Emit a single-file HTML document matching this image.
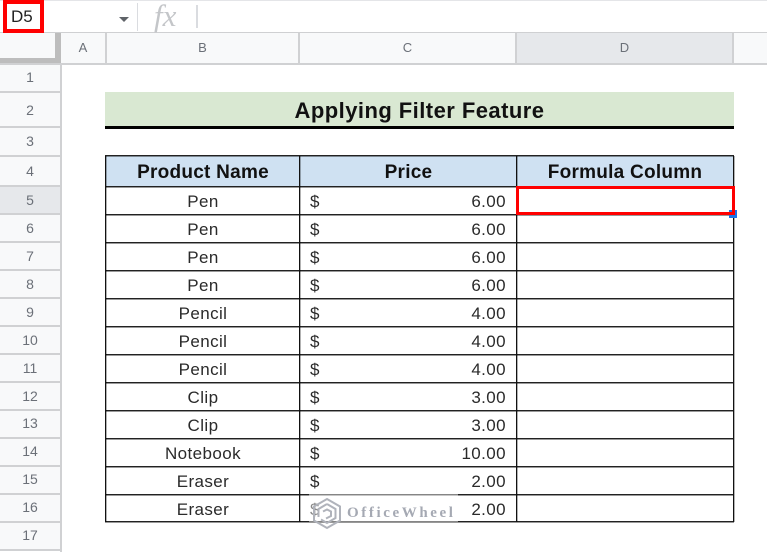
<!DOCTYPE html>
<html>
<head>
<meta charset="utf-8">
<style>
html,body{margin:0;padding:0;background:#fff}
#p{position:relative;width:767px;height:552px;overflow:hidden;background:#fff;font-family:"Liberation Sans",sans-serif;filter:blur(.3px)}
#p div{position:absolute;box-sizing:border-box}
.rh{left:0;width:60px;text-align:center;color:#6b7078;font-size:14px;background:#f8f9fa;border-bottom:2px solid #d0d1d3}
.ch{top:33px;height:31px;line-height:30px;text-align:center;color:#6b7078;font-size:13px;background:#f8f9fa;border-right:2px solid #d0d1d3}
.h{left:105px;width:629px;height:1px;background:#222;box-shadow:0 1px 0 rgba(0,0,0,.4)}
.v{top:156px;height:366px;width:1px;background:#111;box-shadow:1px 0 0 rgba(0,0,0,.3)}
.t{height:28px;line-height:29px;font-size:17px;color:#2a2a2a;text-align:center;letter-spacing:.4px}
.b{left:106px;width:194px}
.d{left:310px;width:20px;text-align:left}
.n{left:400px;width:106px;text-align:right}
.hd{top:158px;height:29px;line-height:29px;font-size:19px;font-weight:bold;color:#111;text-align:center;letter-spacing:.25px}
</style>
</head>
<body>
<div id="p">
  <div style="left:0;top:0;width:767px;height:1px;background:#e4e5e8"></div>
  <div style="left:0;top:32px;width:767px;height:2px;background:#cfd0d2"></div>
  <div style="left:137px;top:3px;width:1px;height:28px;background:#dadce0"></div>
  <div style="left:196px;top:5px;width:2px;height:23px;background:#dadce0"></div>
  <div style="left:11px;top:8px;font-size:17px;line-height:18px;color:#222">D5</div>
  <div style="left:119px;top:17px;width:0;height:0;border-left:5px solid transparent;border-right:5px solid transparent;border-top:5px solid #5f6368"></div>
  <div style="left:154px;top:0;font-family:'Liberation Serif',serif;font-style:italic;font-size:31px;line-height:32px;color:#c4c6c9">fx</div>
  <div style="left:3px;top:0;width:41px;height:33px;border:4px solid #f00"></div>

  <div style="left:0;top:33px;width:60px;height:31px;background:#f8f9fa"></div>
  <div style="left:0;top:58px;width:60px;height:6px;background:#bdbdbd"></div>
  <div style="left:55px;top:33px;width:6px;height:31px;background:#bdbdbd"></div>
  <div class="ch" style="left:61px;width:46px">A</div>
  <div class="ch" style="left:107px;width:193px">B</div>
  <div class="ch" style="left:300px;width:217px">C</div>
  <div class="ch" style="left:517px;width:217px;background:#e6e8eb">D</div>
  <div class="ch" style="left:734px;width:33px;border-right:0"></div>
  <div style="left:0;top:63px;width:767px;height:2px;background:#d0d1d3"></div>

  <div class="rh" style="top:65px;height:28px;line-height:25px">1</div>
  <div class="rh" style="top:93px;height:35px;line-height:34px">2</div>
  <div class="rh" style="top:128px;height:29px;line-height:27px">3</div>
  <div class="rh" style="top:157px;height:30px;line-height:28px">4</div>
  <div class="rh" style="top:187px;height:28px;line-height:26px;background:#e6e8eb">5</div>
  <div class="rh" style="top:215px;height:28px;line-height:26px">6</div>
  <div class="rh" style="top:243px;height:28px;line-height:26px">7</div>
  <div class="rh" style="top:271px;height:28px;line-height:26px">8</div>
  <div class="rh" style="top:299px;height:28px;line-height:26px">9</div>
  <div class="rh" style="top:327px;height:28px;line-height:26px">10</div>
  <div class="rh" style="top:355px;height:28px;line-height:26px">11</div>
  <div class="rh" style="top:383px;height:28px;line-height:26px">12</div>
  <div class="rh" style="top:411px;height:28px;line-height:25px">13</div>
  <div class="rh" style="top:439px;height:28px;line-height:25px">14</div>
  <div class="rh" style="top:467px;height:28px;line-height:25px">15</div>
  <div class="rh" style="top:495px;height:28px;line-height:25px">16</div>
  <div class="rh" style="top:523px;height:28px;line-height:25px">17</div>
  <div style="left:60px;top:64px;width:2px;height:488px;background:#d0d1d3"></div>

  <div style="left:105px;top:92px;width:629px;height:35px;background:#d9e8d2"></div>
  <div style="left:105px;top:126px;width:629px;height:3px;background:#000"></div>
  <div style="left:105px;top:97px;width:629px;height:28px;line-height:28px;text-align:center;font-size:22px;font-weight:bold;color:#111;letter-spacing:.45px">Applying Filter Feature</div>

  <div style="left:105px;top:156px;width:629px;height:30px;background:#cfe1f2"></div>
  <div class="hd" style="left:106px;width:194px">Product Name</div>
  <div class="hd" style="left:300px;width:217px">Price</div>
  <div class="hd" style="left:517px;width:216px">Formula Column</div>

  <div class="t b" style="top:187px">Pen</div><div class="t d" style="top:187px">$</div><div class="t n" style="top:187px">6.00</div>
  <div class="t b" style="top:215px">Pen</div><div class="t d" style="top:215px">$</div><div class="t n" style="top:215px">6.00</div>
  <div class="t b" style="top:243px">Pen</div><div class="t d" style="top:243px">$</div><div class="t n" style="top:243px">6.00</div>
  <div class="t b" style="top:271px">Pen</div><div class="t d" style="top:271px">$</div><div class="t n" style="top:271px">6.00</div>
  <div class="t b" style="top:299px">Pencil</div><div class="t d" style="top:299px">$</div><div class="t n" style="top:299px">4.00</div>
  <div class="t b" style="top:327px">Pencil</div><div class="t d" style="top:327px">$</div><div class="t n" style="top:327px">4.00</div>
  <div class="t b" style="top:355px">Pencil</div><div class="t d" style="top:355px">$</div><div class="t n" style="top:355px">4.00</div>
  <div class="t b" style="top:383px">Clip</div><div class="t d" style="top:383px">$</div><div class="t n" style="top:383px">3.00</div>
  <div class="t b" style="top:411px">Clip</div><div class="t d" style="top:411px">$</div><div class="t n" style="top:411px">3.00</div>
  <div class="t b" style="top:439px">Notebook</div><div class="t d" style="top:439px">$</div><div class="t n" style="top:439px">10.00</div>
  <div class="t b" style="top:467px">Eraser</div><div class="t d" style="top:467px">$</div><div class="t n" style="top:467px">2.00</div>
  <div class="t b" style="top:495px">Eraser</div><div class="t d" style="top:495px">$</div><div class="t n" style="top:495px">2.00</div>

  <div class="h" style="top:155px"></div>
  <div class="h" style="top:186px"></div>
  <div class="h" style="top:214px"></div>
  <div class="h" style="top:242px"></div>
  <div class="h" style="top:270px"></div>
  <div class="h" style="top:298px"></div>
  <div class="h" style="top:326px"></div>
  <div class="h" style="top:354px"></div>
  <div class="h" style="top:382px"></div>
  <div class="h" style="top:410px"></div>
  <div class="h" style="top:438px"></div>
  <div class="h" style="top:466px"></div>
  <div class="h" style="top:494px"></div>
  <div class="h" style="top:521px"></div>
  <div class="v" style="left:105px"></div>
  <div class="v" style="left:299px"></div>
  <div class="v" style="left:516px"></div>
  <div class="v" style="left:733px"></div>

  <div style="left:729px;top:210px;width:8px;height:8px;background:#1a73e8"></div>
  <div style="left:516px;top:186px;width:219px;height:29px;border:3px solid #f00"></div>

  <div style="left:309px;top:494px;width:149px;height:28px;background:rgba(255,255,255,.45)"></div>
  <svg style="position:absolute;left:311px;top:497px" width="32" height="33" viewBox="0 0 32 33" fill="none" stroke="#b0b3bb" stroke-width="2">
    <path d="M16 2 L29 9.5 V23.5 L16 31 L3 23.5 V9.5 Z"/>
    <path d="M16 7 L24.5 12 V21 L16 26 L10 22.5 M7.5 20 V12 L16 7"/>
    <path d="M12 14.5 L16 12.5 L20 14.5 V19 L15 21.5"/>
  </svg>
  <div style="left:347px;top:504px;font-family:'Liberation Serif',serif;font-size:15px;line-height:18px;color:#a5a9b3;letter-spacing:2.6px;font-weight:bold">OfficeWheel</div>
</div>
</body>
</html>
